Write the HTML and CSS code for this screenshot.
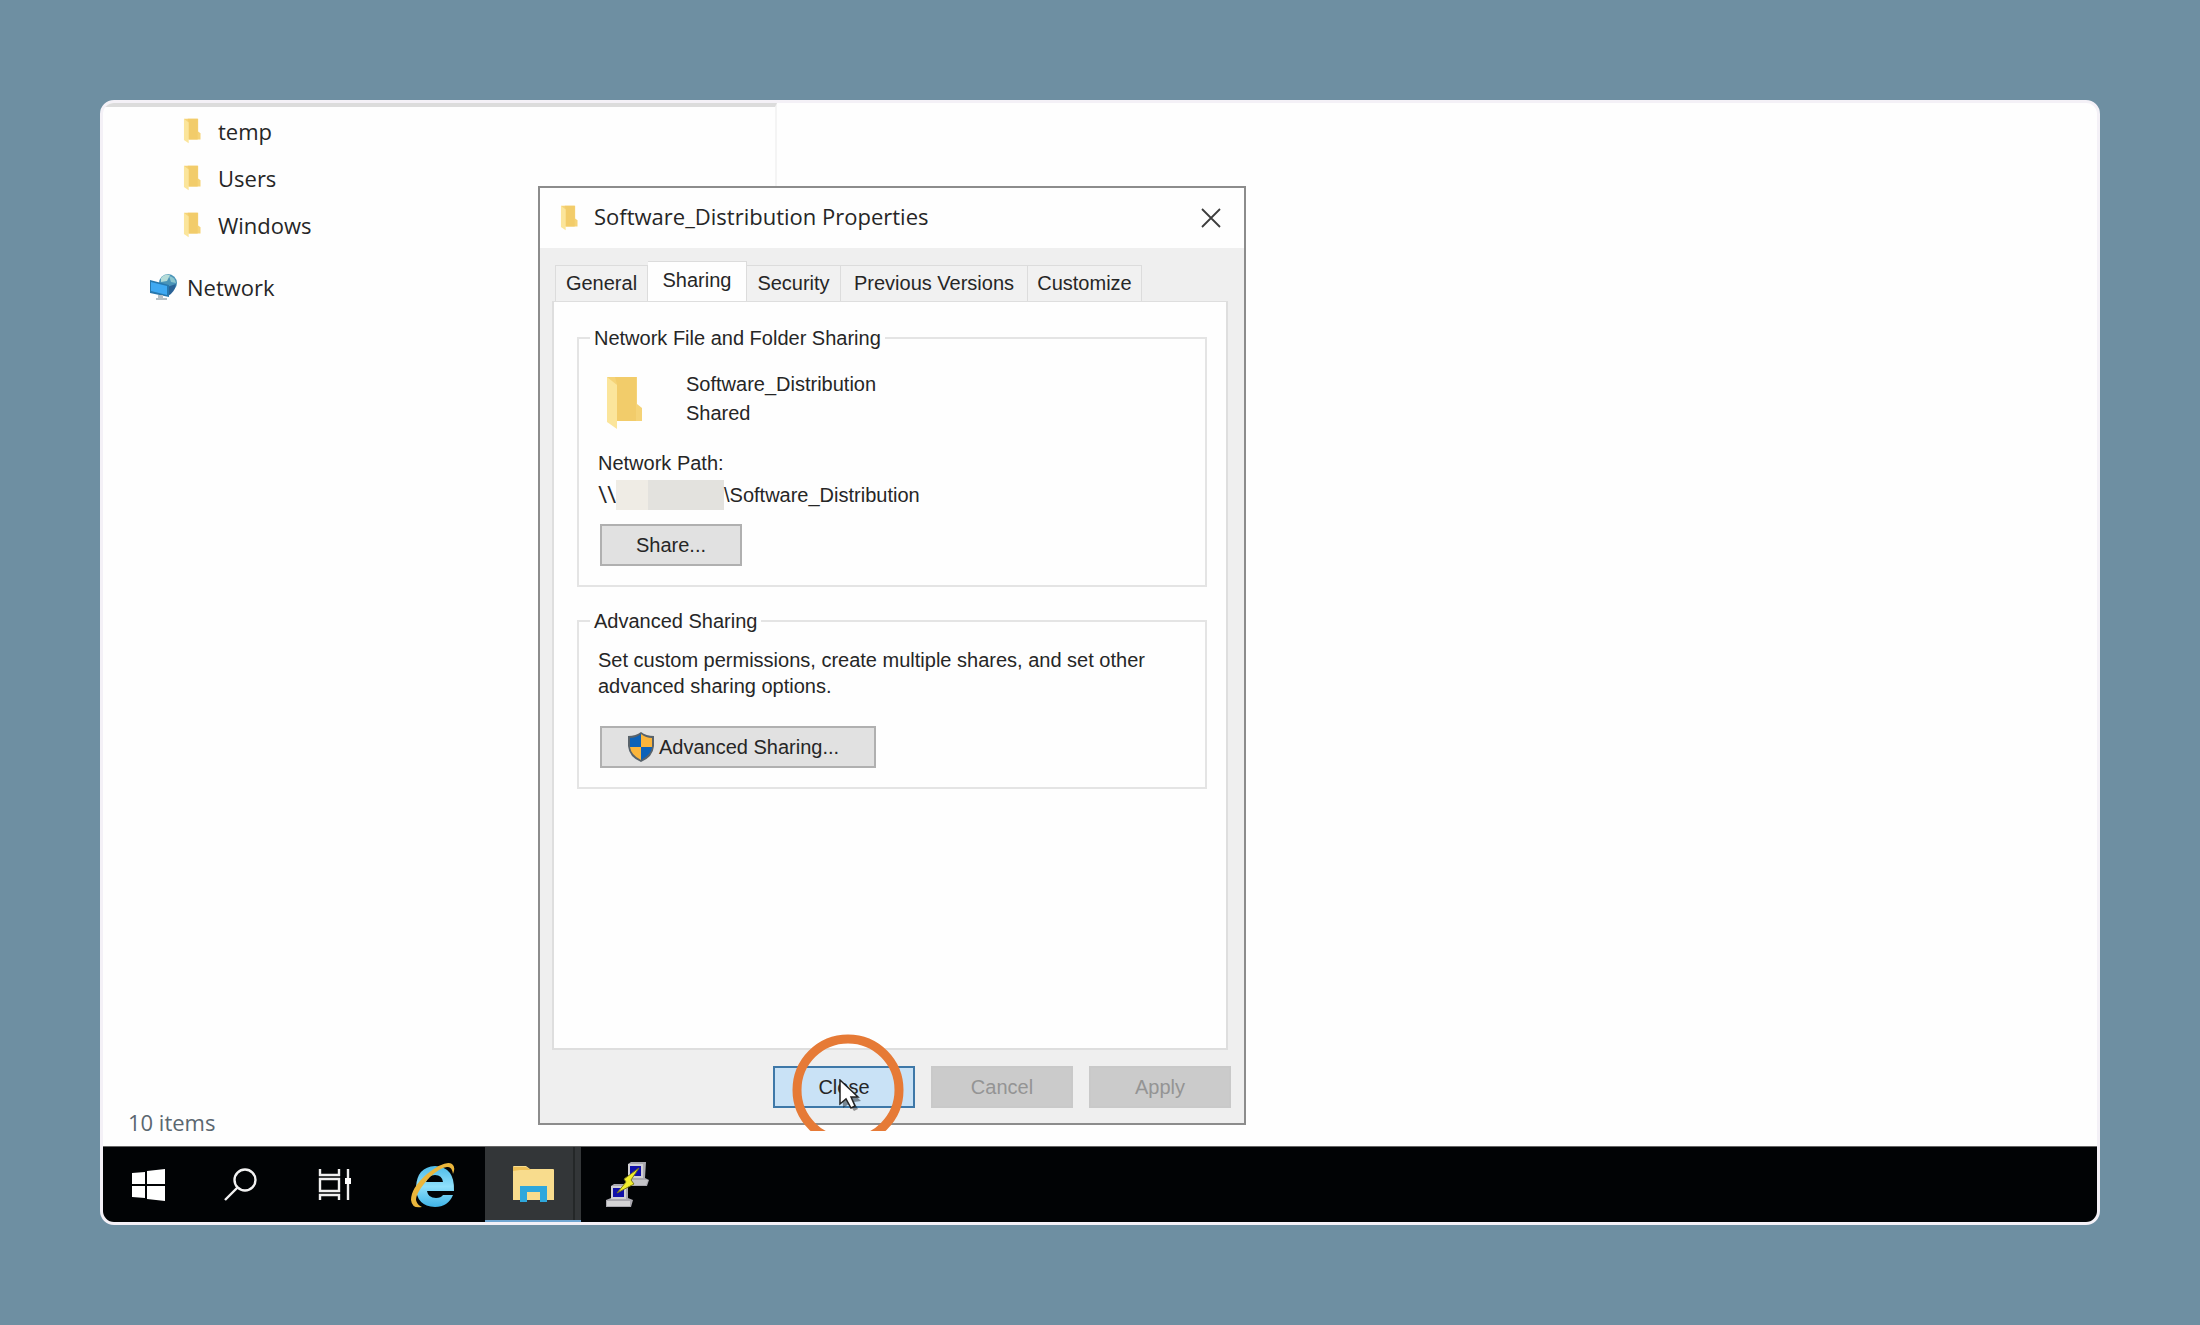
FILE: index.html
```html
<!DOCTYPE html>
<html lang="en">
<head>
<meta charset="utf-8">
<title>Software_Distribution Properties</title>
<link rel="stylesheet" href="styles.css">
</head>
<body>
<svg class="symbols" aria-hidden="true">
  <symbol id="folder" viewBox="0 0 38 54">
    <path d="M2 1H32V28L37 32V45H10Z" fill="#f5d377"/>
    <path d="M12 8V45H31V1H10Z" fill="#f2cc6a"/>
    <path d="M2 1L12 9V53L2 46Z" fill="#fbe59b"/>
  </symbol>
</svg>
<main class="desktop">
  <div class="explorer">
    <nav class="tree" aria-label="Folders">
      <ul class="tree-list">
        <li><a class="node" href="#temp"><svg class="folder-small"><use href="#folder"/></svg>temp</a></li>
        <li><a class="node" href="#users"><svg class="folder-small"><use href="#folder"/></svg>Users</a></li>
        <li><a class="node" href="#windows"><svg class="folder-small"><use href="#folder"/></svg>Windows</a></li>
        <li><a class="node node-root" href="#network">
          <svg class="network-icon" viewBox="0 0 27 28"><circle cx="18" cy="10" r="9" fill="#4a94b8"/><path d="M11 5Q15 0 20 2L17 8L11 9Z" fill="#b5dcd8"/><path d="M19 3Q25 4 26 10L21 9Z" fill="#8cc6cf"/><path d="M17 14L26 11Q25 19 18 23Z" fill="#2a6296"/><path d="M0 7L19 12V24L0 20Z" fill="#2778ae"/><path d="M1 9L17 13V22L1 18Z" fill="#3fa9f2"/><path d="M8 22H13V25H17V27H6V25H8Z" fill="#b4bfc4"/></svg>Network</a></li>
      </ul>
    </nav>
    <div class="files"></div>
  </div>
  <div class="status">10 items</div>
  <nav class="taskbar" aria-label="Taskbar">
    <button class="task" aria-label="Start"><svg width="33" height="32" viewBox="0 0 33 32"><path d="M0 4L13 3V15H0ZM15 2L33 0V15H15ZM0 17H13V29L0 28ZM15 17H33V32L15 30Z" fill="#fff"/></svg></button>
    <button class="task" aria-label="Search"><svg width="33" height="33" viewBox="0 0 33 33"><g fill="none" stroke="#f2f2f2" stroke-width="2.4"><circle cx="21" cy="12" r="10.500"/><path d="M13.500 19.500L1 32"/></g></svg></button>
    <button class="task" aria-label="Task View"><svg width="33" height="32" viewBox="0 0 33 32"><g fill="none" stroke="#f0f0f0" stroke-width="2.4"><path d="M2 0V6H21V0M2 10H21V22H2ZM2 31V26H21V31M30 0V31"/></g><path d="M27 9H33V15H27Z" fill="#fff"/></svg></button>
    <button class="task task-ie" aria-label="Internet Explorer"><svg width="46" height="46" viewBox="0 0 46 46">
      <defs><linearGradient id="sky" x1="0" y1="0" x2="0" y2="1"><stop offset="0" stop-color="#4dbbe8"/><stop offset=".5" stop-color="#8fe0fb"/><stop offset="1" stop-color="#3fb3e6"/></linearGradient></defs>
      <path d="M44 29H17Q18 36 26 36Q31 36 33 33H43Q38 45 25 45Q6 44 6 25Q7 5 25 4Q45 5 44 29ZM16 20H33Q32 13 25 13Q18 13 16 20Z" fill="url(#sky)"/>
      <path d="M12 45Q2 47 1 38Q1 26 17 12Q35 -2 42 2Q46 5 43 12Q42 5 38 5Q32 4 20 15Q6 30 6 38Q7 43 12 45Z" fill="#eab63c"/></svg></button>
    <button class="task task-active" aria-label="File Explorer"><svg width="43" height="38" viewBox="0 0 43 38"><path d="M1 2Q1 1 2 1H14L18 4H41Q42 4 42 5V35H1Z" fill="#f8dc8d"/><path d="M1 2H14L19 5H8L1 6Z" fill="#eec057"/><path d="M8 21H35V37H28V27H15V37H8Z" fill="#2ea7dc"/></svg></button>
    <button class="task" aria-label="PuTTY"><svg width="44" height="46" viewBox="0 0 44 46">
      <path d="M22 2L25 0H40L39 16L43 18L41 24H25L22 19Z" fill="#aaa9b0"/><path d="M22 2H37V16H22Z" fill="#d0d0d4"/><path d="M24 4H35V14H24Z" fill="#1010a8"/><path d="M26 18H42L40 23H27Z" fill="#c4c4c8"/>
      <path d="M5 24L8 22H22V36L27 38L25 45H0V38L5 36Z" fill="#aaa9b0"/><path d="M5 24H20V37H5Z" fill="#d0d0d4"/><path d="M7 26H18V35H7Z" fill="#1010a8"/><path d="M1 39H24V44H1Z" fill="#d4d4d6"/>
      <path d="M33 6L18 17L20 20L11 31L28 22L25 18Z" fill="#f2ee2c" stroke="#79781e"/></svg></button>
  </nav>

  <section class="dialog" role="dialog" aria-labelledby="dialog-title">
    <header class="titlebar">
      <svg class="folder-small"><use href="#folder"/></svg>
      <h1 class="title" id="dialog-title">Software_Distribution Properties</h1>
      <button class="dismiss" aria-label="Close window"><svg width="20" height="20" viewBox="0 0 20 20"><path d="M1 1L19 19M19 1L1 19" stroke="#3c3c3c" stroke-width="1.800" fill="none"/></svg></button>
    </header>
    <div class="dialog-body">
      <div class="tabs" role="tablist">
        <button class="tab tab-general" role="tab">General</button>
        <button class="tab tab-selected" role="tab" aria-selected="true">Sharing</button>
        <button class="tab tab-security" role="tab">Security</button>
        <button class="tab tab-versions" role="tab">Previous Versions</button>
        <button class="tab tab-customize" role="tab">Customize</button>
      </div>
      <div class="panel" role="tabpanel">
        <fieldset class="group group-network">
          <legend>Network File and Folder Sharing</legend>
          <div class="share">
            <svg class="folder-large"><use href="#folder"/></svg>
            <p class="share-name">Software_Distribution<br>Shared</p>
          </div>
          <p class="path-label">Network Path:</p>
          <p class="path"><span class="slashes">\\</span><span class="mask"></span>\Software_Distribution</p>
          <button class="button">Share...</button>
        </fieldset>
        <fieldset class="group group-advanced">
          <legend>Advanced Sharing</legend>
          <p class="hint">Set custom permissions, create multiple shares, and set other<br>advanced sharing options.</p>
          <button class="button button-wide"><svg width="28" height="30" viewBox="0 0 28 30"><path d="M14 0Q19 4 27 4V14Q26 25 14 30Q2 25 1 14V4Q9 4 14 0Z" fill="#59636b"/><path d="M14 2V15H3V6Q9 6 14 2ZM14 15H25Q24 23 14 28Z" fill="#0d62b8"/><path d="M14 2Q19 6 25 6V15H14ZM3 15H14V28Q4 23 3 15Z" fill="#fbb53b"/></svg>Advanced Sharing...</button>
        </fieldset>
      </div>
      <footer class="actions">
        <button class="button button-default">Close</button>
        <button class="button" disabled>Cancel</button>
        <button class="button" disabled>Apply</button>
      </footer>
    </div>
    <svg class="click-ring" width="112" height="97" viewBox="0 0 112 97" aria-hidden="true"><circle cx="56" cy="56" r="51" fill="none" stroke="#e67a36" stroke-width="9"/></svg>
    <svg class="cursor" width="24" height="32" viewBox="0 0 24 32" aria-hidden="true"><path d="M3 4L22 22L15 23L19 30L15 32L10 25L4 29Z" fill="#000" opacity=".4"/><path d="M1 1V25L7 20L12 29L16 27L12 18H19Z" fill="#fff" stroke="#222" stroke-width="1.500"/></svg>
  </section>
</main>
</body>
</html>
```
FILE: styles.css
```css
* { box-sizing: border-box; }

body {
  margin: 0;
  min-height: 100vh;
  padding: 100px;
  display: flex;
  background: #6e8fa2;
  font-family: "Open Sans", "Noto Sans", sans-serif;
  font-size: 22px;
  color: #262626;
}

p, h1, ul, fieldset { margin: 0; padding: 0; }
ul { list-style: none; }
svg { display: block; flex: none; }
button { font: inherit; color: inherit; border: 0; padding: 0; background: none; }
.symbols { position: absolute; width: 0; height: 0; }

.desktop {
  position: relative;
  flex: 1;
  display: flex;
  flex-direction: column;
  overflow: hidden;
  border: 3px solid #f4f1f7;
  border-radius: 14px;
  background: #fefefe;
}

.explorer { flex: 1; display: flex; }
.tree {
  width: 674px;
  border-top: 4px solid #dcdcdc;
  border-right: 2px solid #f4f4f4;
}
.node {
  display: flex;
  align-items: center;
  gap: 17px;
  height: 47px;
  padding-left: 80px;
  color: inherit;
  text-decoration: none;
}
.node-root { margin-top: 15px; padding-left: 47px; gap: 10px; }
.files { flex: 1; }
.folder-small { width: 18px; height: 26px; }
.network-icon { width: 27px; height: 28px; }

.status {
  height: 44px;
  padding-left: 25px;
  line-height: 40px;
  font-size: 22px;
  color: #5b6770;
}

.taskbar {
  display: flex;
  height: 76px;
  border-top: 1px solid #666;
  background: #010305;
}
.task {
  width: 94px;
  display: flex;
  align-items: center;
  justify-content: center;
}
.task:first-child { width: 90px; }
.task-ie { width: 104px; }
.task-active {
  width: 96px;
  border-bottom: 2px solid #71a7d2;
  background: linear-gradient(to right, #333638 88px, #242728 88px 90px, #333638 90px);
}

.dialog {
  position: absolute;
  left: 435px;
  top: 83px;
  width: 708px;
  height: 939px;
  display: flex;
  flex-direction: column;
  border: 2px solid #8c8c8c;
  background: #efefef;
  font-family: "Liberation Sans", Arial, sans-serif;
  font-size: 20px;
}
.titlebar {
  display: flex;
  align-items: center;
  height: 60px;
  padding: 0 23px 0 20px;
  gap: 16px;
  background: #fefefe;
}
.title {
  flex: 1;
  padding-bottom: 4px;
  font: 400 22px "Open Sans", "Noto Sans", sans-serif;
}
.dialog-body {
  flex: 1;
  display: flex;
  flex-direction: column;
  padding: 13px 13px 15px 12px;
}
.tabs { display: flex; align-items: flex-end; padding-left: 3px; }
.tab {
  height: 36px;
  border: 1px solid #dcdcdc;
  border-bottom: 0;
  border-left: 0;
  background: #f1f1f1;
}
.tab-general { width: 93px; border-left: 1px solid #dcdcdc; }
.tab-selected { width: 99px; height: 40px; padding-bottom: 3px; background: #fefefe; }
.tab-security { width: 94px; }
.tab-versions { width: 187px; }
.tab-customize { width: 114px; }
.panel {
  flex: 1;
  display: flex;
  flex-direction: column;
  margin-right: 3px;
  padding: 22px 19px 0 23px;
  gap: 20px;
  border: 2px solid #dedede;
  border-top-width: 1px;
  background: #fefefe;
}
.group {
  border: 2px solid #e4e4e4;
  padding: 0 20px 0 19px;
}
.group legend { margin-left: -8px; padding: 0 4px; line-height: 28px; }
.group-network { height: 263px; }
.group-advanced { height: 182px; }

.share { display: flex; gap: 43px; padding: 18px 0 0 7px; }
.folder-large { width: 38px; height: 54px; margin-top: 6px; }
.share-name { line-height: 29px; }
.path-label { margin-top: 17px; line-height: 32px; }
.path { display: flex; align-items: center; line-height: 32px; }
.slashes { width: 18px; font-family: Roboto, sans-serif; font-size: 22px; }
.mask {
  width: 108px;
  height: 30px;
  background: linear-gradient(to right, #efece5 32px, #e3e2de 32px);
}
.hint { padding-top: 12px; line-height: 26px; }

.button {
  display: flex;
  align-items: center;
  justify-content: center;
  width: 142px;
  height: 42px;
  border: 2px solid #b0b0b0;
  background: #e1e1e1;
}
.group .button { margin: 13px 0 0 2px; }
.group .button-wide {
  justify-content: flex-start;
  width: 276px;
  margin-top: 27px;
  padding-left: 25px;
  gap: 4px;
}

.actions { display: flex; justify-content: flex-end; gap: 16px; padding: 16px 0 0; }
.button:disabled { border-color: #c9c9c9; background: #cbcbcb; color: #949494; }
.button-default { border-color: #3e78a8; background: #c9e2f6; }

.click-ring { position: absolute; left: 252px; top: 846px; }
.cursor { position: absolute; left: 299px; top: 891px; }
```
